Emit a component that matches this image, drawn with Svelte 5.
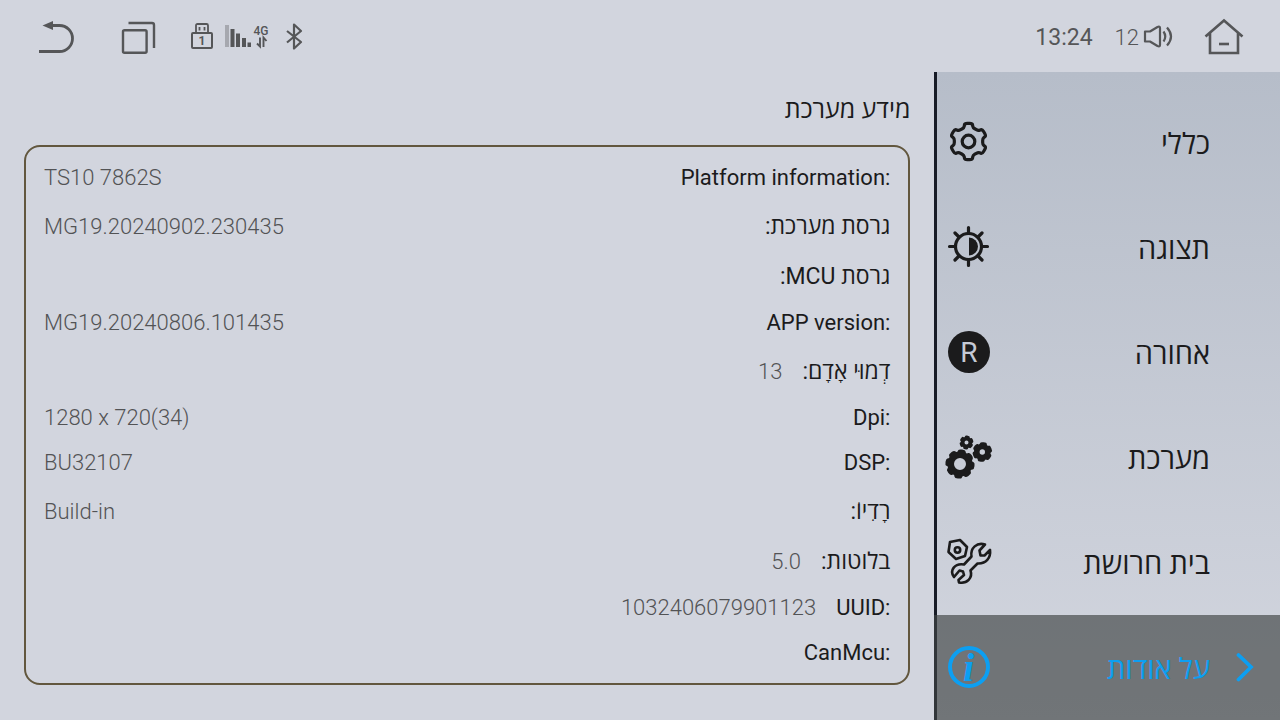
<script>
  const info = [
    { label: 'Platform information:', value: 'TS10 7862S', far: true },
    { label: 'גרסת מערכת:', value: 'MG19.20240902.230435', far: true, hebrew: true },
    { label: 'גרסת MCU:', value: '', hebrew: true },
    { label: 'APP version:', value: 'MG19.20240806.101435', far: true },
    { label: 'דְמוּי אָדָם:', value: '13', hebrew: true },
    { label: 'Dpi:', value: '1280 x 720(34)', far: true },
    { label: 'DSP:', value: 'BU32107', far: true },
    { label: 'רָדִיוֹ:', value: 'Build-in', far: true, hebrew: true },
    { label: 'בלוטות:', value: '5.0', hebrew: true },
    { label: 'UUID:', value: '1032406079901123' },
    { label: 'CanMcu:', value: '' },
  ];

  const sections = [
    { id: 'general', label: 'כללי' },
    { id: 'display', label: 'תצוגה' },
    { id: 'reverse', label: 'אחורה' },
    { id: 'system', label: 'מערכת' },
    { id: 'factory', label: 'בית חרושת' },
    { id: 'about', label: 'על אודות' },
  ];

  let active = $state('about');

  // Closed cog outline with rounded corners; angles are in degrees.
  function cog(cx, cy, outer, inner, teeth, top, base, turn = 0, soft = 0.35) {
    const pts = [];
    for (let i = 0; i < teeth; i++) {
      const a = turn - 90 + (360 / teeth) * i;
      for (const [r, d] of [[inner, -base], [outer, -top], [outer, top], [inner, base]]) {
        const t = ((a + d) * Math.PI) / 180;
        pts.push([cx + r * Math.cos(t), cy + r * Math.sin(t)]);
      }
    }
    const mix = (p, q, k) => [p[0] + (q[0] - p[0]) * k, p[1] + (q[1] - p[1]) * k];
    const f = (p) => p.map((n) => n.toFixed(2)).join(' ');
    return (
      pts
        .map((p, i) => {
          const prev = pts[(i + pts.length - 1) % pts.length];
          const next = pts[(i + 1) % pts.length];
          return `${i ? 'L' : 'M'}${f(mix(p, prev, soft))}Q${f(p)} ${f(mix(p, next, soft))}`;
        })
        .join('') + 'Z'
    );
  }

  const hole = (cx, cy, r) => `M${cx - r} ${cy}a${r} ${r} 0 1 0 ${2 * r} 0a${r} ${r} 0 1 0 ${-2 * r} 0Z`;
</script>

<div class="screen" dir="rtl" lang="he">
  <header dir="ltr">
    <button class="back" aria-label="Back">
      <svg width="38" height="36" viewBox="0 0 38 36">
        <path d="M14 6.500H21.500A13 13 0 0 1 21.500 32.500H1" fill="none" stroke="currentColor" stroke-width="2.800" />
        <path d="M4.500 6.500L15 2V11Z" fill="currentColor" />
      </svg>
    </button>
    <button class="recent" aria-label="Recent apps">
      <svg width="36" height="36" viewBox="0 0 36 36" fill="none" stroke="currentColor" stroke-width="2.400">
        <rect x="3" y="11.200" width="23.600" height="22.600" rx="1.500" />
        <path d="M8.500 4H32Q34 4 34 6V29" />
      </svg>
    </button>
    <div class="status">
      <svg width="22" height="28" viewBox="0 0 22 28" aria-hidden="true">
        <g fill="none" stroke="currentColor" stroke-width="2">
          <rect x="1" y="10" width="20" height="15" rx="1" />
          <path d="M5 10V2.500Q5 1 6.500 1H15.500Q17 1 17 2.500V10M8.500 4V7.500M13.500 4V7.500" stroke-width="1.800" />
        </g>
        <text x="11" y="22" text-anchor="middle" font-size="12" font-weight="700" fill="currentColor">1</text>
      </svg>
      <svg class="signal" width="26" height="28" viewBox="0 0 26 28" fill="currentColor" aria-hidden="true">
        <rect y="2" width="4" height="22" opacity=".35" />
        <path d="M5.500 6h4v18h-4zM11 10.500h4v13.500h-4zM17 15h4v9h-4zM22.500 19.500h3.500v4.500h-3.500z" />
      </svg>
      <svg class="data" width="16" height="28" viewBox="0 0 16 28" aria-hidden="true">
        <text x="8" y="12" text-anchor="middle" font-size="12" font-weight="500" fill="currentColor">4G</text>
        <path d="M7 14.500V23.500L4 20.500M10.500 24V14.500L13.500 18" fill="none" stroke="currentColor" stroke-width="1.900" />
      </svg>
      <svg width="20" height="28" viewBox="0 0 20 28" fill="none" stroke="currentColor" stroke-width="2.200" stroke-linejoin="round" aria-hidden="true">
        <path d="M2 8L16 19L9 25.500V1.500L16 8L2 19.500" />
      </svg>
    </div>
    <span class="spacer"></span>
    <time>13:24</time>
    <div class="volume">
      <span>12</span>
      <svg width="30" height="28" viewBox="0 0 30 28" fill="none" stroke="currentColor" stroke-width="2.200" stroke-linejoin="round" aria-hidden="true">
        <path d="M2 8.500H7L14.500 4Q17 3 17 5V22Q17 24 14.500 23L7 18.500H2ZM20.500 8.500Q24 13.500 20.500 18.500M24 4.500Q32 13.500 24 22.500" />
      </svg>
    </div>
    <button class="home" aria-label="Home">
      <svg width="40" height="38" viewBox="0 0 40 38" fill="none" stroke="currentColor" stroke-width="2.600">
        <path d="M1.500 18.500L20 2.500L38.500 18.500M6 15V35H34V15" />
        <path d="M15 26H25" />
      </svg>
    </button>
  </header>

  <div class="body">
    <nav>
      {#each sections as item (item.id)}
        <button class="item" class:active={active === item.id} onclick={() => (active = item.id)}>
          <span class="arrow">
            {#if active === item.id}
              <svg width="20" height="30" viewBox="0 0 20 30" fill="none" stroke="currentColor" stroke-width="3.800" stroke-linecap="round" aria-hidden="true">
                <path d="M4.500 3L17 15L4.500 27.500" />
              </svg>
            {/if}
          </span>
          <span class="name">{item.label}</span>
          <svg class="icon" width="48" height="48" viewBox="0 0 48 48" fill="none" stroke="currentColor" stroke-width="3.200" aria-hidden="true">
            {#if item.id === 'general'}
              <path d={cog(23.5, 23.5, 18.5, 14.5, 6, 12, 18)} stroke-linejoin="round" />
              <circle cx="23.500" cy="23.500" r="6.300" />
            {:else if item.id === 'display'}
              <circle cx="23.500" cy="23.500" r="13" />
              <path d="M23.500 4.500V10M23.500 37V42.500M4.500 23.500H10M37 23.500H42.500M10 10L14 14M33 33L37 37M37 10L33 14M14 33L10 37" stroke-linecap="round" />
              <path d="M24 14.500A9 9 0 0 1 24 32.500Z" fill="currentColor" stroke="none" />
            {:else if item.id === 'reverse'}
              <circle cx="24" cy="24" r="21" fill="currentColor" stroke="none" />
              <text x="24" y="34" text-anchor="middle" font-size="28" fill="#c5cad5" stroke="none">R</text>
            {:else if item.id === 'system'}
              <g fill="currentColor" fill-rule="evenodd" stroke="none">
                <path d={cog(15, 31, 15, 12.5, 8, 13, 19, 8, 0.48) + hole(15, 31, 6)} />
                <path d={cog(37.3, 19, 10.3, 8.3, 6, 18, 25, 8, 0.48) + hole(37.3, 19, 2.7)} />
                <path d={cog(21.5, 9.5, 7.3, 5.7, 6, 18, 25, 8, 0.48) + hole(21.5, 9.5, 2)} />
              </g>
            {:else if item.id === 'factory'}
              <g stroke-width="2.600" stroke-linejoin="round" transform="translate(0 -1)">
                <path d="M5 5L15 3L22 10L20 19L11 22L3.500 15Z" />
                <circle cx="12.500" cy="13" r="2.700" />
                <path d="M26.500 19.500C25 11 32 5 40 7.500L34.500 13.500L35.500 18.500L39.500 18.500L45 13C46 21 41 27 32.500 26.500L25.500 33.500C28 41 22 47 14 45.500L13.500 43L19 38L18 34.500L14.500 33.500L9 40C4 33 10 26 19 27.500Z" />
              </g>
            {:else}
              <circle cx="24" cy="24" r="19" stroke-width="4" />
              <text class="mark" x="23.500" y="38" text-anchor="middle" fill="currentColor" stroke="none">i</text>
            {/if}
          </svg>
        </button>
      {/each}
    </nav>

    <main>
      <h1>מידע מערכת</h1>
      <dl>
        {#each info as row}
          <div class="row" class:hebrew={row.hebrew} class:far={row.far}>
            <dt dir="auto">{row.label}</dt>
            <dd dir="ltr">{row.value}</dd>
          </div>
        {/each}
      </dl>
    </main>
  </div>
</div>

<style>
  :global(body) {
    margin: 0;
    background: #d2d5de;
  }
  .screen {
    min-height: 100vh;
    display: flex;
    flex-direction: column;
    background: #d2d5de;
    color: #1b1b1c;
    font-family: Roboto, 'Open Sans', sans-serif;
  }
  button {
    padding: 0;
    border: 0;
    background: none;
    color: inherit;
    font: inherit;
    cursor: pointer;
  }
  svg {
    display: block;
    flex: none;
  }
  header {
    height: 72px;
    box-sizing: border-box;
    display: flex;
    align-items: center;
    padding: 2px 36px 0 38px;
    color: #555658;
    font-size: 22px;
  }
  .recent {
    margin-left: 44px;
  }
  .status {
    display: flex;
    align-items: center;
    margin-left: 35px;
  }
  .signal {
    margin-left: 12px;
  }
  .data {
    margin: 0 16px 0 2px;
  }
  .spacer {
    flex: 1;
  }
  time {
    font-size: 23px;
    font-weight: 450;
  }
  .volume {
    display: flex;
    align-items: center;
    gap: 4px;
    margin: 0 31px 0 22px;
  }
  .volume span {
    font-weight: 350;
  }
  .body {
    flex: 1;
    display: flex;
  }
  nav {
    width: 27%;
    box-sizing: border-box;
    flex: none;
    padding-top: 18px;
    background: linear-gradient(90deg, #171b26 3px, transparent 3px), linear-gradient(#b6bdc9, #d3d6df);
  }
  .item {
    width: 100%;
    height: 105px;
    display: grid;
    grid-template-columns: 70px 1fr 48px;
    align-items: center;
    padding: 0 0 2px 11px;
    text-align: right;
    font-size: 29px;
  }
  .item.active {
    background: rgba(64, 68, 69, 0.67);
    color: #0c9ff2;
  }
  .name {
    padding-top: 2px;
  }
  .arrow {
    padding-right: 26px;
  }
  .mark {
    font: italic bold 40px 'Liberation Serif', serif;
  }
  main {
    flex: 1;
    min-width: 0;
    padding: 20px 24px 35px;
  }
  h1 {
    margin: 0 0 17px;
    font-size: 25px;
    line-height: 36px;
    font-weight: 400;
  }
  dl {
    margin: 0;
    padding: 8px 18px;
    border: 2px solid #62573e;
    border-radius: 16px;
  }
  .row {
    display: flex;
    gap: 20px;
    font-size: 22px;
    line-height: 45px;
  }
  .row.hebrew {
    padding: 4px 0 1px;
  }
  .hebrew dt {
    font-size: 23px;
  }
  .row.far {
    justify-content: space-between;
  }
  dd {
    margin: 0;
    color: #525355;
    font-weight: 350;
  }
</style>
